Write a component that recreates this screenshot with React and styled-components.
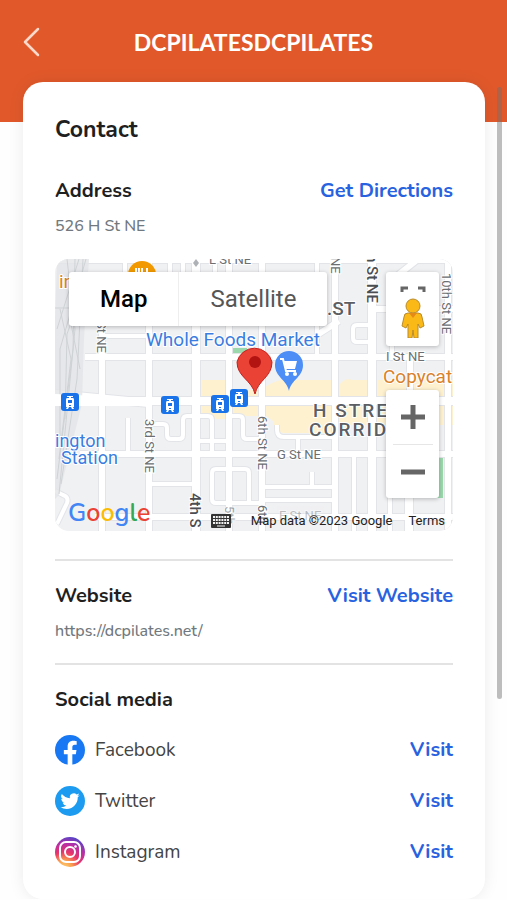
import styled, { createGlobalStyle } from "styled-components";

const GlobalStyle = createGlobalStyle`
  * {
    box-sizing: border-box;
  }

  body {
    margin: 0;
    background: #fefefe;
    color: #1f1f1f;
    font-family: Nunito, Lato, "Open Sans", sans-serif;
  }

  h1, h2, h3, p, ul {
    margin: 0;
    padding: 0;
  }
`;

const Header = styled.header`
  display: grid;
  grid-template-columns: 32px 1fr 32px;
  align-items: center;
  height: 122px;
  padding: 0 16px 38px;
  background: #e1592b;
  color: #fff;
`;

const BackButton = styled.button`
  display: flex;
  justify-content: center;
  padding: 0;
  border: 0;
  background: none;
  color: #fbd9cb;
  cursor: pointer;
`;

const Title = styled.h1`
  font-family: Lato, sans-serif;
  font-size: 23px;
  font-weight: 700;
  line-height: 30px;
  text-align: center;
`;

const Card = styled.main`
  position: relative;
  margin: -40px 22px 0 23px;
  padding: 33px 32px 22px;
  border-radius: 20px;
  background: #fff;
  box-shadow: 0 0 16px rgba(0, 0, 0, 0.08);
`;

const CardTitle = styled.h2`
  margin-bottom: 31px;
  font-size: 23px;
  font-weight: 700;
  line-height: 30px;
`;

const Section = styled.section`
  & + & {
    margin-top: 20px;
    padding-top: 20px;
    border-top: 2px solid #e3e3e3;
  }
`;

const SectionHeader = styled.div`
  display: flex;
  justify-content: space-between;
  align-items: center;
`;

const SectionTitle = styled.h3`
  font-size: 20px;
  font-weight: 700;
  line-height: 30px;
`;

const ActionLink = styled.a`
  color: #2962e0;
  font-size: 20px;
  font-weight: 700;
  line-height: 30px;
  text-decoration: none;
`;

const Detail = styled.p`
  margin-top: 8px;
  color: #71797e;
  font-size: 16px;
  font-weight: 500;
  line-height: 24px;
`;

const MapFrame = styled.div`
  position: relative;
  aspect-ratio: 398 / 272;
  margin: 21px 0 28px;
  overflow: hidden;
  border-radius: 14px;
  font-family: Roboto, sans-serif;
`;

const MapCanvas = styled.svg`
  display: block;
  width: 100%;
  height: 100%;
  font-family: Roboto, sans-serif;
`;

const MapTypes = styled.div`
  position: absolute;
  top: 13px;
  left: 14px;
  display: flex;
  border-radius: 3px;
  background: #fff;
  box-shadow: 0 1px 4px rgba(0, 0, 0, 0.25);
`;

const MapType = styled.button`
  height: 54px;
  padding: 0 31px;
  border: 0;
  background: none;
  color: ${(props) => (props.$active ? "#000" : "#565656")};
  font-family: inherit;
  font-size: 24px;
  font-weight: ${(props) => (props.$active ? 500 : 400)};
  cursor: pointer;

  & + & {
    border-left: 1px solid #eee;
  }
`;

const MapControls = styled.div`
  position: absolute;
  right: 14px;
  display: flex;
  flex-direction: column;
  align-items: center;
  width: 53px;
  border-radius: 3px;
  background: #fff;
  box-shadow: 0 1px 4px rgba(0, 0, 0, 0.25);
`;

const ViewControls = styled(MapControls)`
  top: 13px;
  height: 74px;
`;

const ZoomControls = styled(MapControls)`
  top: 131px;
`;

const ControlButton = styled.button`
  display: flex;
  justify-content: center;
  align-items: center;
  width: 40px;
  height: 54px;
  padding: 0;
  border: 0;
  background: none;
  cursor: pointer;

  & + & {
    border-top: 1px solid #e6e6e6;
  }
`;

const PegmanButton = styled(ControlButton)`
  height: 74px;
`;

const MapFooter = styled.div`
  position: absolute;
  right: 0;
  bottom: 0;
  left: 0;
  display: flex;
  justify-content: space-between;
  align-items: flex-end;
  padding: 0 8px 0 13px;
`;

const GoogleLogo = styled.a`
  font-family: Nunito, Lato, sans-serif;
  font-size: 25px;
  font-weight: 600;
  line-height: 36px;
  text-decoration: none;
`;

const Letter = styled.span`
  color: ${(props) => props.$color};
`;

const Attribution = styled.div`
  display: flex;
  align-items: center;
  padding-left: 4px;
  color: #222;
  font-size: 13px;
  line-height: 20px;
`;

const KeyboardButton = styled.button`
  display: flex;
  margin-right: 20px;
  padding: 0;
  border: 0;
  background: none;
`;

const TermsLink = styled.a`
  margin-left: 16px;
  color: inherit;
  text-decoration: none;
`;

const SocialList = styled.ul`
  margin-top: 9px;
  list-style: none;
`;

const SocialRow = styled.li`
  display: flex;
  align-items: center;
  height: 51px;
`;

const SocialName = styled.span`
  flex: 1;
  margin-left: 10px;
  color: #444;
  font-size: 19px;
  line-height: 30px;
`;

const ScrollThumb = styled.div`
  position: fixed;
  top: 87px;
  right: 5px;
  width: 5px;
  height: 68vh;
  border-radius: 3px;
  background: rgba(110, 110, 110, 0.45);
`;

const googleLetters = [
  ["G", "#4285f4"],
  ["o", "#ea4335"],
  ["o", "#fbbc05"],
  ["g", "#4285f4"],
  ["l", "#34a853"],
  ["e", "#ea4335"],
];

const minorRoads =
  "M48 77H94 M70 1V20 M115 1V20 M128 1V20 M160 1V20 M73 159V195 M94 165H108Q112 165 112 169V176Q112 180 116 180H124Q128 180 128 176V161Q128 157 132 157H141 M141 157H153Q157 157 157 161V195 M141 182H174 M94 225H141 M174 157H184Q188 157 188 161V176Q188 180 192 180H207 M194 244V214Q194 210 190 210H161Q157 210 157 214V240Q157 244 161 244H207 M222 166V171Q222 178 229 178H280 M243 179V194 M207 228H280 M207 241H280 M257 228V213 M299 194V272 M335 235V272 M352 235V272 M262 1V98 M318 83H302Q298 83 298 79V70Q298 66 302 66H318 M337 98V30 M0 232L8 236Q14 238 12 244L2 265";
const roads =
  "M0 1H398 M47 68V272 M94 1V272 M174 1V272 M207 0V272 M280 0V272 M355 98V272 M393 0V272 M30 98H398 M25 195H398 M40 258H398 M262 76L284 62 M338 20L362 1 M318 50H398";
const mainRoads = "M141 0V272 M317 0V272 M0 142H398 M0 135L94 144";

const tramStops = [
  [6, 134],
  [106, 137],
  [156, 136],
  [175, 130],
];

const StreetMap = () => (
  <MapCanvas
    viewBox="0 0 398 272"
    preserveAspectRatio="xMidYMid slice"
    role="img"
    aria-label="Map of H Street Northeast"
  >
    <rect width="398" height="272" fill="#f0f1f3" />
    <path
      d="M147 121H172V160H147Z M178 131H205V157H178Z M210 128Q225 118 240 121H276V174H228Q218 172 218 162L210 156Z M284 126Q290 118 298 121H398V166H284Z"
      fill="#fdf1d0"
    />
    <path d="M366 198H388V239H366Z M178 89H192V95H178Z" fill="#9bd8ac" />
    <g fill="none" strokeLinejoin="round">
      <path d={minorRoads} stroke="#e2e4e8" strokeWidth="6" />
      <path d={roads} stroke="#e2e4e8" strokeWidth="8" />
      <path d={mainRoads} stroke="#e2e4e8" strokeWidth="10" />
      <path d={minorRoads} stroke="#fff" strokeWidth="4" />
      <path d={roads} stroke="#fff" strokeWidth="6" />
      <path d={mainRoads} stroke="#fff" strokeWidth="8" />
    </g>
    <path
      d="M2 0H34L29 80L27 145L4 236L0 240V60Z"
      fill="#e3e5e7"
      opacity="0.8"
    />
    <path
      d="M12 0L20 70L4 235 M20 0L18 90L2 220 M28 0L22 120L6 225 M31 0L5 90V180 M5 50L16 100L4 200 M32 20L12 75L10 160 M24 0L2 70 M0 49H16 M15 60L25 110"
      fill="none"
      stroke="#cfd2d5"
      strokeWidth="1"
    />
    <path d="M0 135L40 137L94 141V147H0Z" fill="#fff" />

    <g fill="#6b6e72" fontSize="13" stroke="#fff" strokeWidth="2" paintOrder="stroke">
      <text x="154" y="5">L St NE</text>
      <text x="331" y="102">I St NE</text>
      <text x="222" y="200">G St NE</text>
      <text x="224" y="261" opacity="0.4">F St NE</text>
      <text transform="translate(42 62) rotate(90)">St NE</text>
      <text transform="translate(276 -2) rotate(90)">NE</text>
      <text transform="translate(90 160) rotate(90)">3rd St NE</text>
      <text transform="translate(203 157) rotate(90)">6th St NE</text>
      <text transform="translate(203 246) rotate(90)">6th</text>
      <text transform="translate(170 247) rotate(90)" opacity="0.6">5th</text>
      <text transform="translate(387 14) rotate(90)">10th St NE</text>
      <g fill="#4b4e52" fontSize="15" fontWeight="500">
        <text transform="translate(312 -5) rotate(90)">h St NE</text>
        <text transform="translate(135 234) rotate(90)">4th S</text>
      </g>
    </g>
    <g fill="#5b5e63" fontSize="19" fontWeight="500" stroke="#fff" strokeWidth="2" paintOrder="stroke">
      <text x="272" y="56">.ST</text>
      <text x="258" y="158" letterSpacing="2">H STRE</text>
      <text x="254" y="177" letterSpacing="2">CORRID</text>
    </g>
    <g fontSize="19" stroke="#fff" strokeWidth="2" paintOrder="stroke">
      <g fill="#3b7de0">
        <text x="91" y="87">Whole Foods Market</text>
        <text x="0" y="188" fontSize="18">ington</text>
        <text x="6" y="205" fontSize="18">Station</text>
      </g>
      <text x="4" y="29" fill="#d9822b">in</text>
      <text x="328" y="124" fill="#d9822b">Copycat</text>
    </g>
    <circle cx="87" cy="16" r="14" fill="#f29900" />
    <path
      d="M81 9V14M84 9V14M87 9V14M84 14V20M92 9V20"
      stroke="#fff"
      strokeWidth="2"
    />
    <path d="M141 0L144 4L141 8L138 4Z" fill="#aeb2b6" />

    {tramStops.map(([x, y]) => (
      <g key={x} transform={`translate(${x} ${y})`}>
        <rect width="18" height="18" rx="3" fill="#1a73e8" />
        <path d="M6 3H12V4H10V5H12Q13 5 13 7V14H12L13 16H11L10 14H8L7 16H5L6 14H5V7Q5 5 6 5H8V4H6Z" fill="#fff" />
        <path d="M7 7H11V10H7Z M8 12H10V13H8Z" fill="#1a73e8" />
      </g>
    ))}

    <path
      d="M234 132C232 121 220 118 220 106A14 14 0 0 1 248 106C248 118 236 121 234 132Z"
      fill="#4c8df6"
    />
    <path
      d="M229 102L231 110H240L242 102Z"
      fill="#fff"
    />
    <path
      d="M225 100H228L231 112H241"
      fill="none"
      stroke="#fff"
      strokeWidth="2"
    />
    <circle cx="232" cy="115" r="2" fill="#fff" />
    <circle cx="240" cy="115" r="2" fill="#fff" />
    <path
      d="M200 135C197 121 182 118 182 103A18 18 0 0 1 217 103C217 118 203 121 200 135Z"
      fill="#ea4335"
      stroke="#c5221f"
    />
    <circle cx="200" cy="103" r="6" fill="#b31412" />
  </MapCanvas>
);

const Pegman = () => (
  <svg width="30" height="58" viewBox="0 0 30 58" aria-hidden="true">
    <path
      d="M4 12V8H10M20 8H26V12"
      fill="none"
      stroke="#666"
      strokeWidth="3"
    />
    <path
      d="M10 33Q6 33 6 37L4 46L8 48L10 44V58H14L15 50L16 58H20V44L22 48L26 46L24 37Q24 33 20 33Z"
      fill="#fbb917"
      stroke="#b98b2b"
    />
    <circle cx="15" cy="26" r="7" fill="#fbb917" stroke="#b98b2b" />
    <path d="M11 33H19L15 38Z" fill="#e58a17" />
  </svg>
);

const Keyboard = () => (
  <svg width="20" height="14" viewBox="0 0 20 14" aria-hidden="true">
    <rect width="20" height="14" rx="1" fill="#333" />
    <path
      d="M2 3H18M2 6H18M2 9H18"
      stroke="#f2f2f2"
      strokeWidth="2"
      strokeDasharray="2 .8"
    />
    <path d="M6 12H14" stroke="#f2f2f2" strokeWidth="1" />
  </svg>
);

const FacebookIcon = () => (
  <svg width="30" height="30" viewBox="0 0 24 24" aria-hidden="true">
    <circle cx="12" cy="12" r="12" fill="#1877f2" />
    <path
      d="M16.67 15.47 17.2 12h-3.33V9.75c0-.95.47-1.87 1.96-1.87h1.51V4.92s-1.37-.23-2.69-.23c-2.74 0-4.53 1.66-4.53 4.67V12H7.08v3.47h3.04V24h3.75v-8.53z"
      fill="#fff"
    />
  </svg>
);

const TwitterIcon = () => (
  <svg width="30" height="30" viewBox="0 0 30 30" aria-hidden="true">
    <circle cx="15" cy="15" r="15" fill="#1d9bf0" />
    <g transform="translate(5.5 5.5) scale(.8)">
      <path
        d="M23.95 4.57a10 10 0 0 1-2.82.77 4.96 4.96 0 0 0 2.16-2.72c-.95.55-2 .95-3.12 1.18a4.92 4.92 0 0 0-8.39 4.49C7.69 8.1 4.07 6.13 1.64 3.16a4.92 4.92 0 0 0 1.52 6.57 4.9 4.9 0 0 1-2.23-.61v.06c0 2.39 1.7 4.38 3.95 4.83a5 5 0 0 1-2.21.08 4.94 4.94 0 0 0 4.6 3.42A9.87 9.87 0 0 1 0 19.54a13.99 13.99 0 0 0 7.55 2.21c9.05 0 14-7.5 14-13.98 0-.21 0-.42-.02-.63a9.94 9.94 0 0 0 2.46-2.55z"
        fill="#fff"
      />
    </g>
  </svg>
);

const InstagramIcon = () => (
  <svg width="30" height="30" viewBox="0 0 30 30" aria-hidden="true">
    <defs>
      <radialGradient id="instagram" cx="0.3" cy="1.05" r="1.1">
        <stop offset="0" stopColor="#fed373" />
        <stop offset="0.25" stopColor="#f9a04e" />
        <stop offset="0.5" stopColor="#e8356b" />
        <stop offset="0.75" stopColor="#b82ea6" />
        <stop offset="1" stopColor="#4c45c8" />
      </radialGradient>
    </defs>
    <circle cx="15" cy="15" r="15" fill="url(#instagram)" />
    <g fill="none" stroke="#fff" strokeWidth="2">
      <rect x="5" y="5" width="20" height="20" rx="6" />
      <circle cx="15" cy="15" r="5" />
    </g>
    <circle cx="20.5" cy="9.5" r="1.3" fill="#fff" />
  </svg>
);

const socialLinks = [
  { name: "Facebook", href: "https://facebook.com", Icon: FacebookIcon },
  { name: "Twitter", href: "https://twitter.com", Icon: TwitterIcon },
  { name: "Instagram", href: "https://instagram.com", Icon: InstagramIcon },
];

const LocationMap = () => (
  <MapFrame>
    <StreetMap />
    <MapTypes>
      <MapType type="button" $active>
        Map
      </MapType>
      <MapType type="button">Satellite</MapType>
    </MapTypes>
    <ViewControls>
      <PegmanButton type="button" aria-label="Street View">
        <Pegman />
      </PegmanButton>
    </ViewControls>
    <ZoomControls>
      <ControlButton type="button" aria-label="Zoom in">
        <svg width="24" height="24" aria-hidden="true">
          <path d="M0 12H24M12 0V24" stroke="#666" strokeWidth="5" />
        </svg>
      </ControlButton>
      <ControlButton type="button" aria-label="Zoom out">
        <svg width="24" height="24" aria-hidden="true">
          <path d="M0 12H24" stroke="#666" strokeWidth="5" />
        </svg>
      </ControlButton>
    </ZoomControls>
    <MapFooter>
      <GoogleLogo href="https://maps.google.com">
        {googleLetters.map(([letter, color], index) => (
          <Letter key={index} $color={color}>
            {letter}
          </Letter>
        ))}
      </GoogleLogo>
      <Attribution>
        <KeyboardButton type="button" aria-label="Keyboard shortcuts">
          <Keyboard />
        </KeyboardButton>
        <span>Map data ©2023 Google</span>
        <TermsLink href="#terms">Terms</TermsLink>
      </Attribution>
    </MapFooter>
  </MapFrame>
);

const App = () => {
  return (
    <>
      <GlobalStyle />
      <Header>
        <BackButton type="button" aria-label="Back">
          <svg width="18" height="30" viewBox="0 0 18 30" aria-hidden="true">
            <path
              d="M15 2L2 15L15 28"
              fill="none"
              stroke="currentColor"
              strokeWidth="2.5"
              strokeLinecap="round"
              strokeLinejoin="round"
            />
          </svg>
        </BackButton>
        <Title>DCPILATESDCPILATES</Title>
      </Header>
      <Card>
        <CardTitle>Contact</CardTitle>
        <Section>
          <SectionHeader>
            <SectionTitle>Address</SectionTitle>
            <ActionLink href="#directions">Get Directions</ActionLink>
          </SectionHeader>
          <Detail>526 H St NE</Detail>
          <LocationMap />
        </Section>
        <Section>
          <SectionHeader>
            <SectionTitle>Website</SectionTitle>
            <ActionLink href="https://dcpilates.net/">Visit Website</ActionLink>
          </SectionHeader>
          <Detail>https://dcpilates.net/</Detail>
        </Section>
        <Section>
          <SectionTitle>Social media</SectionTitle>
          <SocialList>
            {socialLinks.map(({ name, href, Icon }) => (
              <SocialRow key={name}>
                <Icon />
                <SocialName>{name}</SocialName>
                <ActionLink href={href} aria-label={`Visit ${name}`}>
                  Visit
                </ActionLink>
              </SocialRow>
            ))}
          </SocialList>
        </Section>
      </Card>
      <ScrollThumb />
    </>
  );
};

export default App;
